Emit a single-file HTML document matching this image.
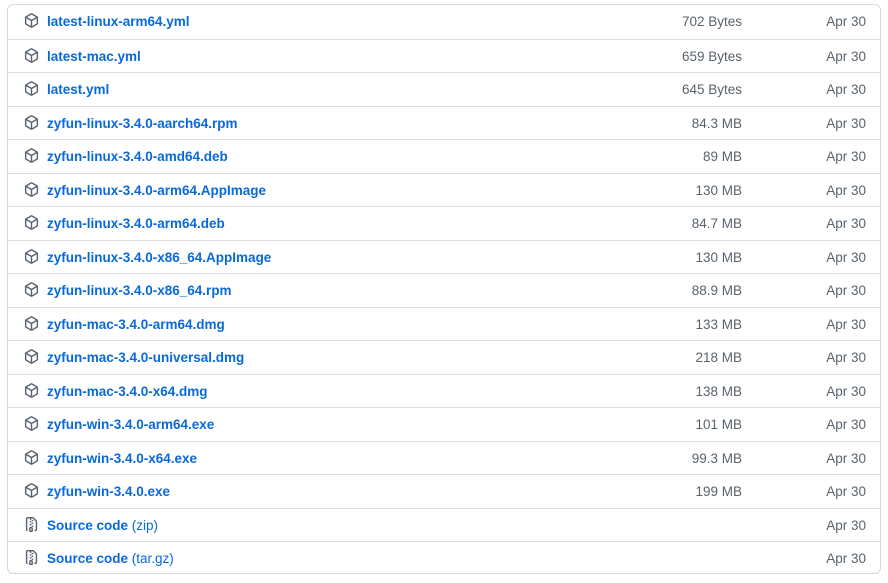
<!DOCTYPE html>
<html><head><meta charset="utf-8"><style>
body{margin:0;background:#fff;font-family:"Liberation Sans",Arial,sans-serif;}
.box{position:absolute;left:7px;top:4px;width:874px;height:570px;border:1px solid #d1d9e0;border-radius:6px;box-sizing:border-box;overflow:hidden}
.row{position:relative;height:33.5px;border-top:1px solid #d8dee4;box-sizing:border-box}
.row:first-child{border-top:none}
.ic{position:absolute;left:16px;top:8px;width:15px;height:15px}
.n{position:absolute;left:39px;top:9px;font-size:13.5px;font-weight:bold;color:#0969da;white-space:nowrap}
.n span{font-weight:normal}
.s{position:absolute;right:138px;top:9px;font-size:13.5px;color:#59636e}
.d{position:absolute;right:14px;top:9px;font-size:13.5px;color:#59636e}
</style></head><body><div class="box" id="b"></div>
<script>
var pkg='<svg class="ic" viewBox="0 0 16 16"><path fill="#59636e" d="m8.878.392 5.25 3.045c.54.314.872.89.872 1.514v6.098a1.75 1.75 0 0 1-.872 1.514l-5.25 3.045a1.75 1.750 0 0 1-1.756 0l-5.25-3.045A1.75 1.75 0 0 1 1 11.049V4.951c0-.624.332-1.201.872-1.514L7.122.392a1.75 1.75 0 0 1 1.756 0ZM7.875 1.690l-4.630 2.685L8 7.133l4.755-2.758-4.630-2.685a.248.248 0 0 0-.250 0ZM2.500 5.677v5.372c0 .090.047.171.125.216l4.625 2.683V8.432Zm6.250 8.271 4.625-2.683a.250.250 0 0 0 .125-.216V5.677L8.750 8.432Z"/></svg>';
var zip='<svg class="ic" viewBox="0 0 16 16"><path fill="#59636e" d="M3.5 1.75v11.5c0 .09.048.173.126.217a.75.75 0 0 1-.752 1.298A1.748 1.748 0 0 1 2 13.25V1.75C2 .784 2.784 0 3.75 0h5.586c.464 0 .909.185 1.237.513l2.914 2.914c.329.328.513.773.513 1.237v8.586A1.75 1.75 0 0 1 12.25 15h-.5a.75.75 0 0 1 0-1.5h.5a.25.25 0 0 0 .25-.25V4.664a.25.25 0 0 0-.073-.177L9.513 1.573a.25.25 0 0 0-.177-.073H7.25a.75.75 0 0 1 0 1.5h-.5a.75.75 0 0 1 0-1.5h-3a.25.25 0 0 0-.25.25Zm3.75 8.75h.5c.966 0 1.75.784 1.75 1.75v3a.75.75 0 0 1-.75.75h-2.5a.75.75 0 0 1-.75-.75v-3c0-.966.784-1.75 1.750-1.75ZM6 5.25a.75.75 0 0 1 .75-.75h.5a.75.75 0 0 1 0 1.5h-.5A.75.75 0 0 1 6 5.25Zm.75 2.25h.5a.75.75 0 0 1 0 1.5h-.5a.75.75 0 0 1 0-1.5ZM8 6.75A.75.75 0 0 1 8.75 6h.5a.75.75 0 0 1 0 1.5h-.5A.75.75 0 0 1 8 6.75ZM8.75 3h.5a.75.75 0 0 1 0 1.5h-.5a.75.75 0 0 1 0-1.5ZM8 9.75A.75.75 0 0 1 8.75 9h.5a.75.75 0 0 1 0 1.5h-.5A.75.75 0 0 1 8 9.75Zm-1 2.5v2.25h1v-2.25a.25.25 0 0 0-.25-.25h-.5a.25.25 0 0 0-.25.25Z"/></svg>';
var r=[["latest-linux-arm64.yml","702 Bytes"],["latest-mac.yml","659 Bytes"],["latest.yml","645 Bytes"],["zyfun-linux-3.4.0-aarch64.rpm","84.3 MB"],["zyfun-linux-3.4.0-amd64.deb","89 MB"],["zyfun-linux-3.4.0-arm64.AppImage","130 MB"],["zyfun-linux-3.4.0-arm64.deb","84.7 MB"],["zyfun-linux-3.4.0-x86_64.AppImage","130 MB"],["zyfun-linux-3.4.0-x86_64.rpm","88.9 MB"],["zyfun-mac-3.4.0-arm64.dmg","133 MB"],["zyfun-mac-3.4.0-universal.dmg","218 MB"],["zyfun-mac-3.4.0-x64.dmg","138 MB"],["zyfun-win-3.4.0-arm64.exe","101 MB"],["zyfun-win-3.4.0-x64.exe","99.3 MB"],["zyfun-win-3.4.0.exe","199 MB"],["Source code <span>(zip)</span>",""],["Source code <span>(tar.gz)</span>",""]];
var h='';r.forEach(function(x,i){h+='<div class="row">'+(i>14?zip:pkg)+'<div class="n">'+x[0]+'</div><div class="s">'+x[1]+'</div><div class="d">Apr 30</div></div>';});
document.getElementById('b').innerHTML=h;
</script></body></html>
